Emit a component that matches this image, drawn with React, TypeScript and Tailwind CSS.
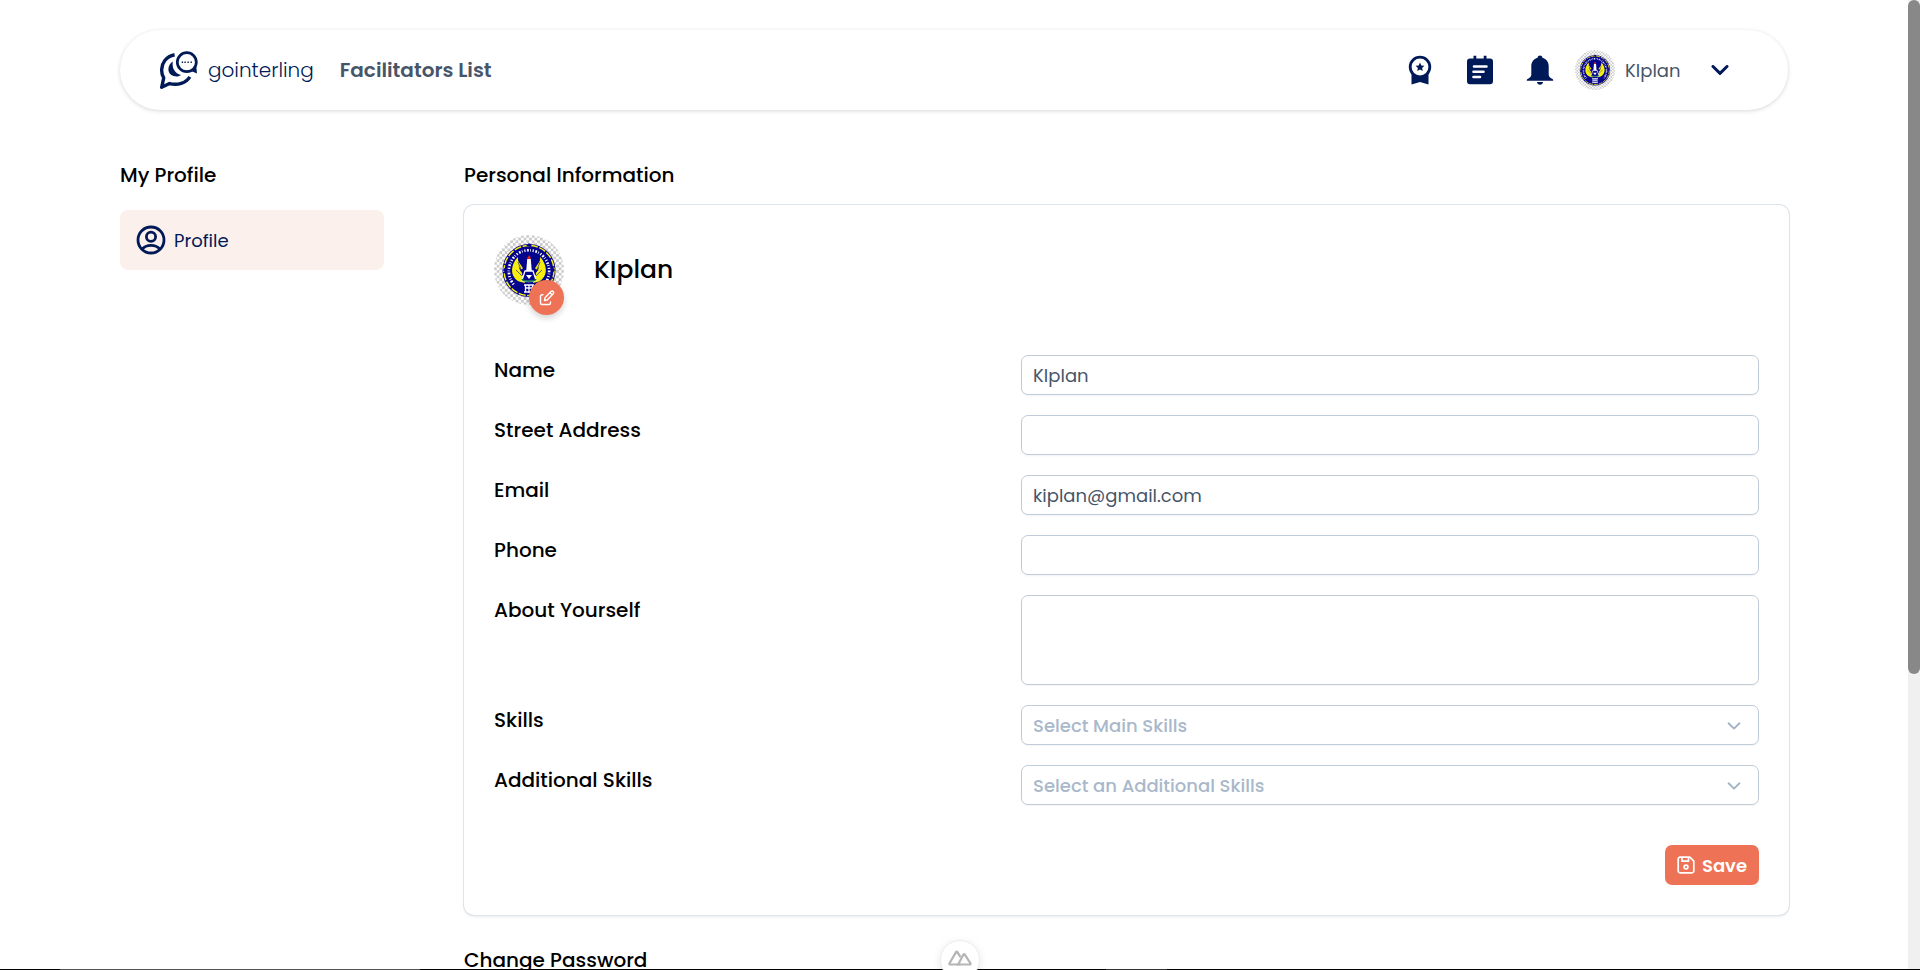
import React from "react";

const NAVY = "#001a57";

function BrandMark() {
  return (
    <svg viewBox="0 0 112 112" className="h-[38px] w-[38px]" fill="none" aria-hidden="true">
      <path
        d="M43 11C18 16 4 36 5 58c0 9 3 16 6 21L5 107l23-11c24 6 48-1 60-20"
        stroke={NAVY}
        strokeWidth="10"
        strokeLinejoin="round"
      />
      <path d="M38 31C20 42 20 68 40 74c9 3 17 1 22-3C44 66 34 50 38 31Z" fill={NAVY} />
      <circle cx="79" cy="33" r="28" stroke={NAVY} strokeWidth="8" />
      <path d="M92 59l17 7-2-20Z" fill={NAVY} />
      <path d="M64 33h4M72 33h4M81 33h4M90 33h4" stroke={NAVY} strokeWidth="4.5" />
    </svg>
  );
}

function AwardIcon() {
  return (
    <svg viewBox="0 0 30 30" className="size-[30px]" aria-hidden="true">
      <path d="M6.500 18h17v11.500L15 27l-8.500 2.500Z" fill={NAVY} />
      <circle cx="15" cy="12" r="9.8" fill="#fff" stroke={NAVY} strokeWidth="2.8" />
      <path
        d="m15 7.6 1.3 2.9 3.1.3-2.3 2.1.7 3.1-2.8-1.6-2.8 1.6.7-3.1-2.3-2.1 3.1-.3Z"
        fill={NAVY}
      />
    </svg>
  );
}

function NotesIcon() {
  return (
    <svg viewBox="0 0 30 30" className="size-[30px]" aria-hidden="true">
      <path
        d="M5 3.5h3.500V.8h2.800v2.700h7.400V.8h2.800v2.700H25A3 3 0 0 1 28 6.500v19.800a3 3 0 0 1-3 3H5a3 3 0 0 1-3-3V6.500a3 3 0 0 1 3-3Z"
        fill={NAVY}
      />
      <path d="M9 11.500h12.500M8.500 16.800h10M8.500 22h6.500" stroke="#fff" strokeWidth="2.600" strokeLinecap="round" />
    </svg>
  );
}

function BellIcon() {
  return (
    <svg viewBox="0 0 30 30" className="size-[30px]" fill={NAVY} aria-hidden="true">
      <path d="M15 .5c1.300 0 2.300.9 2.400 2.200C21.300 3.800 23.700 7 23.700 11v8.500c0 2 1.500 3.500 3.300 4.300 1 .5 1.200.9 1.200 2H1.800c0-1.100.2-1.500 1.200-2 1.800-.8 3.300-2.300 3.300-4.300V11c0-4 2.400-7.200 6.300-8.300C12.700 1.400 13.700.5 15 .5Z" />
      <path d="M12 27h6c0 1.600-1.300 2.700-3 2.700s-3-1.100-3-2.700Z" />
    </svg>
  );
}

function Emblem({ id, className }: { id: string; className: string }) {
  return (
    <svg viewBox="0 0 70 70" className={className} role="img" aria-label="KIplan avatar">
      <defs>
        <pattern id={`${id}-check`} width="5.400" height="5.400" patternUnits="userSpaceOnUse">
          <rect width="5.400" height="5.400" fill="#fff" />
          <rect width="2.700" height="2.700" fill="#cbcbcb" />
          <rect x="2.700" y="2.700" width="2.700" height="2.700" fill="#cbcbcb" />
        </pattern>
        <clipPath id={`${id}-clip`}>
          <circle cx="35" cy="35" r="35" />
        </clipPath>
      </defs>
      <g clipPath={`url(#${id}-clip)`}>
        <rect width="70" height="70" fill={`url(#${id}-check)`} />
        <circle cx="35" cy="35.500" r="26.500" fill="#04048c" />
        <circle cx="35" cy="35.500" r="25" fill="none" stroke="#f6ee10" strokeWidth="1.500" strokeDasharray="7 1.500" />
        <path d="M35 8l3 3h-6ZM9 35l2.500-3v6ZM61 35l-2.500-3v6Z" fill="#04048c" />
        <path
          d="M18 51a23 23 0 0 1-3.500-24A22 22 0 0 1 55.500 27 23 23 0 0 1 52 51"
          transform="translate(35 35.500) scale(.9) translate(-35 -35.500)"
          fill="none"
          stroke="#fff"
          strokeWidth="3"
          strokeDasharray="1.300 1.800 1.900 1.500 .8 2"
        />
        <path
          d="M24 22c-7 7-9 19 1 24.500l6 1.500-2-7c-4-6-5-12-5-19ZM46 22c7 7 9 19-1 24.500l-6 1.500 2-7c4-6 5-12 5-19Z"
          fill="#f6ee10"
        />
        <path
          d="M20.500 31l7 8M20 38.500l8 5M22 25l6 9M49.500 31l-7 8M50 38.500l-8 5M48 25l-6 9"
          stroke="#f6ee10"
          strokeWidth="2.400"
        />
        <path d="M24 27l4 10M22 35l6 6M46 27l-4 10M48 35l-6 6" stroke="#04048c" strokeWidth=".6" />
        <path d="M33.200 24h3.600l1 12h-5.600Z" fill="#fff" />
        <path d="M33.500 24c-.6-2 1-2 1.500-4 .8 1.500 2.200 2.500 1.500 4Z" fill="#e3221b" />
        <path d="M31 36h8l3 9c0 2-14 2-14 0Z" fill="#04048c" stroke="#fff" strokeWidth="1.300" />
        <path d="M28 44c1 3 13 3 14 0" fill="none" stroke="#0a7a45" strokeWidth="1.500" />
        <path d="M32 40h6l-3 4Z" fill="#fff" />
        <path d="M30 50h10M31 53h8M31.500 50v7M35 50v8M38.500 50v7M30 57h10" stroke="#fff" strokeWidth="1.300" />
      </g>
    </svg>
  );
}

function ChevronIcon({ className }: { className: string }) {
  return (
    <svg
      viewBox="0 0 18 10"
      className={className}
      fill="none"
      stroke="currentColor"
      strokeLinecap="round"
      strokeLinejoin="round"
      aria-hidden="true"
    >
      <path d="M2 1.500 9 8.300l7-6.800" />
    </svg>
  );
}

function ProfileIcon() {
  return (
    <svg viewBox="0 0 30 30" className="size-[30px]" fill="none" stroke={NAVY} strokeWidth="2.800" aria-hidden="true">
      <circle cx="15" cy="15" r="13" />
      <circle cx="15" cy="11.800" r="4.600" />
      <path d="M6 24.300c2.200-2.800 5.400-4 9-4s6.800 1.200 9 4" />
    </svg>
  );
}

function EditIcon() {
  return (
    <svg
      viewBox="0 0 16 16"
      className="size-4"
      fill="none"
      stroke="#fff"
      strokeWidth="1.400"
      strokeLinecap="round"
      strokeLinejoin="round"
      aria-hidden="true"
    >
      <path d="M4 4.700H3A1.500 1.500 0 0 0 1.500 6.200v6.800A1.500 1.500 0 0 0 3 14.500h7a1.500 1.500 0 0 0 1.500-1.500v-1" />
      <path d="M5.500 10.500 6 7.800l6-6.200a1.500 1.500 0 0 1 2.200 2.200L8.200 10ZM11 2.800 13.200 5" />
    </svg>
  );
}

function SaveIcon() {
  return (
    <svg
      viewBox="0 0 18 18"
      className="size-[18px]"
      fill="none"
      stroke="#fff"
      strokeWidth="1.700"
      strokeLinejoin="round"
      aria-hidden="true"
    >
      <path d="M3 1.200h9.800l4 4V15a1.800 1.800 0 0 1-1.800 1.800H3A1.800 1.800 0 0 1 1.200 15V3A1.800 1.800 0 0 1 3 1.200Z" />
      <path d="M5 1.200v4h6.500v-4" />
      <circle cx="9" cy="11" r="1.900" />
    </svg>
  );
}

function NuxtIcon() {
  return (
    <svg
      viewBox="0 0 24 16"
      className="h-4 w-6"
      fill="none"
      stroke="#b5b5b5"
      strokeWidth="2.200"
      strokeLinejoin="round"
      strokeLinecap="round"
      aria-hidden="true"
    >
      <path d="M11.500 14.500H2.200c-.7 0-1-.6-.7-1.200L8 2.100c.4-.7 1.100-.7 1.500 0L12 6.400" />
      <path d="M9.800 14.500h12c.7 0 1-.6.700-1.200L16.800 4.600c-.4-.6-1-.6-1.400 0l-4.200 8c-.4.900-.8 1.900-2 1.900" />
    </svg>
  );
}

const control =
  "block w-full rounded-[7px] border border-[#bfccda] bg-white px-[11px] text-[18px] shadow-[0_1px_2px_rgba(18,18,23,0.05)] outline-none";

function Field({ id, label, children }: { id: string; label: string; children: React.ReactNode }) {
  return (
    <div className="grid grid-cols-12">
      <label htmlFor={id} className="col-span-5 text-[20px] leading-[30px] font-medium">
        {label}
      </label>
      <div className="col-span-7">{children}</div>
    </div>
  );
}

function SkillSelect({ id, placeholder }: { id: string; placeholder: string }) {
  return (
    <div className="relative">
      <select
        id={id}
        className={`${control} h-10 appearance-none font-medium text-[#a9b8ca]`}
        defaultValue=""
      >
        <option value="">{placeholder}</option>
      </select>
      <ChevronIcon className="pointer-events-none absolute top-[17px] right-[18px] h-2 w-[14px] stroke-[2.4] text-[#a3b3c6]" />
    </div>
  );
}

export default function App() {
  return (
    <div className="flex h-screen flex-col overflow-hidden bg-white font-['Poppins','Inter',sans-serif] text-black">
      <div className="flex min-h-0 flex-1">
        <div className="min-w-0 flex-1 overflow-hidden px-[120px] pt-[30px]">
          <header className="flex h-20 items-center rounded-full bg-white pr-[58px] pl-10 shadow-[0_1px_4px_rgba(0,0,0,0.16)]">
            <a href="#home" className="flex items-center gap-[10px] text-[20px] font-light text-[#001a57]">
              <BrandMark />
              gointerling
            </a>
            <a href="#facilitators" className="ml-[26px] text-[20px] font-semibold text-[#475569]">
              Facilitators List
            </a>
            <nav className="ml-auto flex items-center gap-[30px]">
              <button type="button" aria-label="Certificates">
                <AwardIcon />
              </button>
              <button type="button" aria-label="Notes">
                <NotesIcon />
              </button>
              <button type="button" aria-label="Notifications">
                <BellIcon />
              </button>
            </nav>
            <button type="button" className="ml-5 flex items-center gap-[10px] text-[18px] text-[#475569]">
              <Emblem id="header" className="size-10" />
              <span className="w-[75px] text-left">KIplan</span>
              <span className="flex w-5 justify-center text-[#001a57]">
                <ChevronIcon className="h-[10px] w-[18px] stroke-3" />
              </span>
            </button>
          </header>

          <div className="flex gap-20 pt-[50px]">
            <aside className="w-[264px] shrink-0">
              <h2 className="text-[20px] leading-[30px] font-medium">My Profile</h2>
              <a
                href="#profile"
                className="mt-5 flex h-[60px] items-center gap-2 rounded-lg bg-[#fcf0ec] px-4 text-[18px] text-[#001a57]"
              >
                <ProfileIcon />
                Profile
              </a>
            </aside>

            <main className="-mr-px min-w-0 flex-1">
              <h2 className="text-[20px] leading-[30px] font-medium">Personal Information</h2>
              <section className="mt-[15px] rounded-[10px] p-[30px] shadow-[0_0_0_1px_#dde4ec,0_2px_3px_rgba(0,0,0,0.08)]">
                <div className="flex items-center gap-[30px]">
                  <div className="relative">
                    <Emblem id="profile" className="size-[70px]" />
                    <button
                      type="button"
                      aria-label="Edit picture"
                      className="absolute right-0 -bottom-[10px] flex size-[35px] items-center justify-center rounded-full bg-[#ee7255] shadow-[0_3px_6px_rgba(0,0,0,0.18)]"
                    >
                      <EditIcon />
                    </button>
                  </div>
                  <h3 className="text-[25px] font-medium">KIplan</h3>
                </div>

                <form className="mt-[50px] flex flex-col gap-5">
                  <Field id="name" label="Name">
                    <input id="name" className={`${control} h-10 text-[#475569]`} defaultValue="KIplan" />
                  </Field>
                  <Field id="address" label="Street Address">
                    <input id="address" className={`${control} h-10 text-[#475569]`} />
                  </Field>
                  <Field id="email" label="Email">
                    <input
                      id="email"
                      type="email"
                      className={`${control} h-10 text-[#475569]`}
                      defaultValue="kiplan@gmail.com"
                    />
                  </Field>
                  <Field id="phone" label="Phone">
                    <input id="phone" type="tel" className={`${control} h-10 text-[#475569]`} />
                  </Field>
                  <Field id="about" label="About Yourself">
                    <textarea id="about" className={`${control} h-[90px] resize-none text-[#475569]`} />
                  </Field>
                  <Field id="skills" label="Skills">
                    <SkillSelect id="skills" placeholder="Select Main Skills" />
                  </Field>
                  <Field id="more-skills" label="Additional Skills">
                    <SkillSelect id="more-skills" placeholder="Select an Additional Skills" />
                  </Field>
                  <button
                    type="button"
                    className="mt-5 flex h-10 items-center gap-[7px] self-end rounded-[7px] bg-[#ee7255] px-3 text-[18px] font-semibold text-white"
                  >
                    <SaveIcon />
                    Save
                  </button>
                </form>
              </section>
              <h2 className="mt-[30px] text-[20px] leading-[30px] font-medium">Change Password</h2>
            </main>
          </div>
        </div>
        <div className="w-3 shrink-0 bg-[#f0f0f0]" aria-hidden="true">
          <div className="h-[69.6%] rounded-full bg-[#888]" />
        </div>
      </div>
      <div className="flex h-px shrink-0 bg-black" aria-hidden="true">
        <div className="ml-[60px] w-[360px] bg-[#555]" />
        <div className="ml-[686px] w-[61px] bg-[#333]" />
      </div>
      <button
        type="button"
        aria-label="Nuxt DevTools"
        className="fixed -bottom-[10px] left-1/2 flex size-10 -translate-x-1/2 items-center justify-center rounded-full border border-[#ececec] bg-white pb-1 shadow-[0_2px_8px_rgba(0,0,0,0.1)]"
      >
        <NuxtIcon />
      </button>
    </div>
  );
}
